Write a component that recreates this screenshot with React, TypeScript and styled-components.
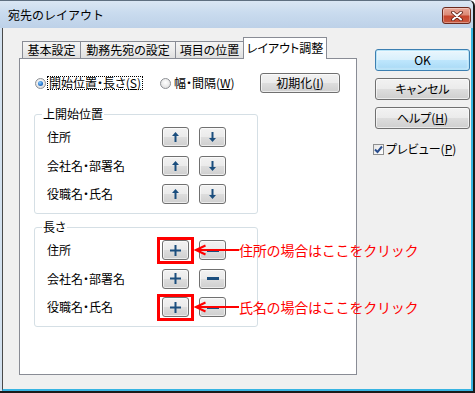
import React from "react";
import styled, { createGlobalStyle, css } from "styled-components";

const UI_FONT = `"Noto Sans CJK JP", "Noto Sans", sans-serif`;

const GlobalStyle = createGlobalStyle`
  html, body { margin: 0; padding: 0; background: #ffffff; }
  body {
    font-family: ${UI_FONT};
    font-size: 12px;
    color: #000;
    font-feature-settings: "palt";
  }
  * { box-sizing: border-box; }
`;

const Frame = styled.div`
  width: 475px;
  height: 393px;
  display: flex;
  flex-direction: column;
  background: #d3e1ef;
  border-top: 1px solid #5f6f80;
  border-right: 2px solid #1b1b1b;
  border-bottom: 2px solid #1b1b1b;
  border-top-right-radius: 6px;
  overflow: hidden;
`;

const TitleBar = styled.div`
  height: 27px;
  flex: none;
  display: flex;
  justify-content: space-between;
  align-items: flex-start;
  padding: 0 2px 0 8px;
  background: linear-gradient(to bottom, #dae6f3 0%, #c9dbee 45%, #bdd1e8 100%);
`;

const TitleText = styled.span`
  font-feature-settings: normal;
  font-size: 12px;
  line-height: 27px;
  color: #000;
`;

const CloseButton = styled.div`
  margin-top: 6px;
  width: 29px;
  height: 17px;
  border: 1px solid #6b2a1e;
  border-radius: 3px;
  background: linear-gradient(to bottom, #e9a899 0%, #dc8a76 45%, #c8452c 55%, #c95a40 100%);
  box-shadow: inset 0 0 0 1px rgba(255, 255, 255, 0.35);
  display: flex;
  align-items: center;
  justify-content: center;
`;

const Client = styled.div`
  flex: 1;
  display: flex;
  margin-left: 2px;
  border-left: 1px solid #4a4a4a;
  border-right: 2px solid #38b4e2;
  border-bottom: 2px solid #38b4e2;
  background: #f0f0f0;
  padding: 9px 0 0 16px;
`;

const LeftColumn = styled.div`
  width: 338px;
  display: flex;
  flex-direction: column;
`;

const TabStrip = styled.div`
  height: 21px;
  display: flex;
  align-items: flex-end;
  padding-left: 3px;
`;

const Tab = styled.div<{ $w: number; $active?: boolean }>`
  width: ${(p) => p.$w}px;
  height: 17px;
  border: 1px solid #898c95;
  border-bottom: none;
  background: linear-gradient(to bottom, #f4f4f4 0%, #ececec 50%, #dfdfdf 100%);
  display: flex;
  align-items: center;
  justify-content: center;
  line-height: 14px;
  white-space: nowrap;
  & + & {
    margin-left: -1px;
  }
  ${(p) =>
    p.$active &&
    css`
      height: 22px;
      background: #ffffff;
      margin-bottom: -1px;
      position: relative;
      z-index: 1;
      padding-bottom: 2px;
    `}
`;

const Panel = styled.div`
  width: 338px;
  height: 317px;
  border: 1px solid #898c95;
  background: #ffffff;
  padding: 14px 0 0 14px;
  display: flex;
  flex-direction: column;
`;

const OptionsRow = styled.div`
  display: grid;
  grid-template-columns: 125px 100px 80px;
  height: 20px;
  align-items: center;
  padding-left: 1px;
`;

const RadioOption = styled.label`
  display: flex;
  align-items: center;
  gap: 2px;
`;

const RadioCircle = styled.span<{ $checked?: boolean }>`
  width: 11px;
  height: 11px;
  border-radius: 50%;
  border: 1px solid #8c8f94;
  background: radial-gradient(circle at 50% 40%, #ffffff 0%, #e4e4e4 70%, #d0d0d0 100%);
  display: flex;
  align-items: center;
  justify-content: center;
  flex: none;
  &::after {
    content: "";
    width: 5px;
    height: 5px;
    border-radius: 50%;
    background: ${(p) =>
      p.$checked ? "radial-gradient(circle at 40% 35%, #8fd0ff 0%, #2a7ad0 55%, #0c4596 100%)" : "transparent"};
  }
`;

const OptionText = styled.span<{ $focused?: boolean }>`
  line-height: 12px;
  padding: 0 1px;
  white-space: nowrap;
  ${(p) =>
    p.$focused &&
    css`
      outline: 1px dotted #000;
      outline-offset: 0;
    `}
`;

const buttonFace = css`
  border: 1px solid #707070;
  border-radius: 3px;
  background: linear-gradient(to bottom, #f2f2f2 0%, #ebebeb 48%, #dddddd 52%, #cfcfcf 100%);
  box-shadow: inset 0 0 0 1px rgba(255, 255, 255, 0.6);
  display: flex;
  align-items: center;
  justify-content: center;
  color: #000;
  white-space: nowrap;
`;

const InitButton = styled.div`
  ${buttonFace};
  width: 80px;
  height: 20px;
  line-height: 14px;
`;

const GroupBox = styled.div<{ $mt: number }>`
  position: relative;
  width: 224px;
  margin-top: ${(p) => p.$mt}px;
  border: 1px solid #d5dfe5;
  border-radius: 3px;
  padding: 12px 0 9px 12px;
`;

const GroupTitle = styled.span`
  position: absolute;
  top: -8px;
  left: 7px;
  padding: 0 1px;
  background: #ffffff;
  line-height: 14px;
`;

const RowsGrid = styled.div`
  display: grid;
  grid-template-columns: 105px 27px 27px;
  grid-auto-rows: 20px;
  column-gap: 10px;
  row-gap: 8.5px;
  align-items: center;
`;

const RowLabel = styled.span`
  line-height: 14px;
  white-space: nowrap;
`;

const SmallButton = styled.div`
  ${buttonFace};
  width: 27px;
  height: 20px;
`;

const Cell = styled.div`
  position: relative;
  width: 27px;
  height: 20px;
`;

const Highlight = styled.div`
  position: absolute;
  top: -3px;
  left: -5px;
  right: -5px;
  bottom: -4px;
  border: 3px solid #ff0000;
  pointer-events: none;
`;

const Callout = styled.div`
  position: absolute;
  left: 32px;
  top: 50%;
  transform: translateY(-50%);
  display: flex;
  align-items: center;
  z-index: 2;
  white-space: nowrap;
`;

const CalloutText = styled.span`
  font-feature-settings: normal;
  font-size: 14px;
  line-height: 16px;
  letter-spacing: -0.2px;
  color: #ff0000;
`;

const RightColumn = styled.div`
  width: 95px;
  margin-left: 18px;
  margin-top: 12px;
  display: flex;
  flex-direction: column;
  gap: 7px;
`;

const DialogButton = styled.div<{ $primary?: boolean }>`
  ${buttonFace};
  width: 95px;
  height: 22px;
  line-height: 14px;
  ${(p) =>
    p.$primary &&
    css`
      border-color: #3c7fb1;
      background: linear-gradient(to bottom, #eaf6fd 0%, #d9f0fc 48%, #bee6fd 52%, #a7d9f5 100%);
      box-shadow: inset 0 0 0 1px #b8e4f8, inset 0 0 2px 1px rgba(255, 255, 255, 0.8);
    `}
`;

const CheckRow = styled.label`
  margin-top: 6px;
  margin-left: -2px;
  display: flex;
  align-items: center;
  gap: 2px;
  line-height: 14px;
`;

const CheckBox = styled.span`
  width: 11px;
  height: 11px;
  border: 1px solid #8e8f8f;
  background: linear-gradient(to bottom right, #e6e6e6, #ffffff);
  display: flex;
  align-items: center;
  justify-content: center;
  flex: none;
`;

const ICON = "#1b4e7e";

const UpIcon = () => (
  <svg width="7" height="10" viewBox="0 0 7 10">
    <path d="M3.5 0 L7 4 H4.5 V10 H2.5 V4 H0 Z" fill={ICON} />
  </svg>
);

const DownIcon = () => (
  <svg width="7" height="10" viewBox="0 0 7 10">
    <path d="M3.5 10 L7 6 H4.5 V0 H2.5 V6 H0 Z" fill={ICON} />
  </svg>
);

const PlusIcon = () => (
  <svg width="11" height="11" viewBox="0 0 11 11">
    <rect x="0" y="4.5" width="11" height="2" fill={ICON} />
    <rect x="4.5" y="0" width="2" height="11" fill={ICON} />
  </svg>
);

const MinusIcon = () => (
  <svg width="12" height="3" viewBox="0 0 12 3">
    <rect x="0" y="0" width="12" height="3" fill={ICON} />
  </svg>
);

const ArrowLeft = () => (
  <svg width="45" height="12" viewBox="0 0 45 12">
    <path d="M2 6 H45" stroke="#ff0000" strokeWidth="2" />
    <path d="M11.5 1.5 L2 6 L11.5 10.5" fill="none" stroke="#ff0000" strokeWidth="2" strokeLinejoin="miter" />
  </svg>
);

const CloseGlyph = () => (
  <svg width="12" height="10" viewBox="0 0 12 10">
    <path d="M2 1.5 L10 8.5 M10 1.5 L2 8.5" stroke="#5a1a10" strokeWidth="3.6" strokeLinecap="round" />
    <path d="M2 1.5 L10 8.5 M10 1.5 L2 8.5" stroke="#ffffff" strokeWidth="2" strokeLinecap="round" />
  </svg>
);

const CheckGlyph = () => (
  <svg width="9" height="9" viewBox="0 0 9 9">
    <path d="M1 4.5 L3.5 7 L8 1.5" fill="none" stroke="#2a4e8e" strokeWidth="2" />
  </svg>
);

const PlusCell = ({ note }: { note?: string }) => (
  <Cell>
    <SmallButton>
      <PlusIcon />
    </SmallButton>
    {note && (
      <>
        <Highlight />
        <Callout>
          <ArrowLeft />
          <CalloutText>{note}</CalloutText>
        </Callout>
      </>
    )}
  </Cell>
);

const startRows = ["住所", "会社名・部署名", "役職名・氏名"];
const lengthRows: { label: string; note?: string }[] = [
  { label: "住所", note: "住所の場合はここをクリック" },
  { label: "会社名・部署名" },
  { label: "役職名・氏名", note: "氏名の場合はここをクリック" },
];

export default function App() {
  return (
    <>
      <GlobalStyle />
      <Frame>
        <TitleBar>
          <TitleText>宛先のレイアウト</TitleText>
          <CloseButton>
            <CloseGlyph />
          </CloseButton>
        </TitleBar>
        <Client>
          <LeftColumn>
            <TabStrip>
              <Tab $w={59}>基本設定</Tab>
              <Tab $w={96}>勤務先宛の設定</Tab>
              <Tab $w={69}>項目の位置</Tab>
              <Tab $w={84} $active>
                レイアウト調整
              </Tab>
            </TabStrip>
            <Panel>
              <OptionsRow>
                <RadioOption>
                  <RadioCircle $checked />
                  <OptionText $focused>
                    開始位置・長さ(<u>S</u>)
                  </OptionText>
                </RadioOption>
                <RadioOption>
                  <RadioCircle />
                  <OptionText>
                    幅・間隔(<u>W</u>)
                  </OptionText>
                </RadioOption>
                <InitButton>
                  初期化(<u>I</u>)
                </InitButton>
              </OptionsRow>

              <GroupBox $mt={21}>
                <GroupTitle>上開始位置</GroupTitle>
                <RowsGrid>
                  {startRows.map((label) => (
                    <React.Fragment key={label}>
                      <RowLabel>{label}</RowLabel>
                      <SmallButton>
                        <UpIcon />
                      </SmallButton>
                      <SmallButton>
                        <DownIcon />
                      </SmallButton>
                    </React.Fragment>
                  ))}
                </RowsGrid>
              </GroupBox>

              <GroupBox $mt={13}>
                <GroupTitle>長さ</GroupTitle>
                <RowsGrid>
                  {lengthRows.map((row) => (
                    <React.Fragment key={row.label}>
                      <RowLabel>{row.label}</RowLabel>
                      <PlusCell note={row.note} />
                      <SmallButton>
                        <MinusIcon />
                      </SmallButton>
                    </React.Fragment>
                  ))}
                </RowsGrid>
              </GroupBox>
            </Panel>
          </LeftColumn>

          <RightColumn>
            <DialogButton $primary>OK</DialogButton>
            <DialogButton>キャンセル</DialogButton>
            <DialogButton>
              ヘルプ(<u>H</u>)
            </DialogButton>
            <CheckRow>
              <CheckBox>
                <CheckGlyph />
              </CheckBox>
              <span>
                プレビュー(<u>P</u>)
              </span>
            </CheckRow>
          </RightColumn>
        </Client>
      </Frame>
    </>
  );
}
